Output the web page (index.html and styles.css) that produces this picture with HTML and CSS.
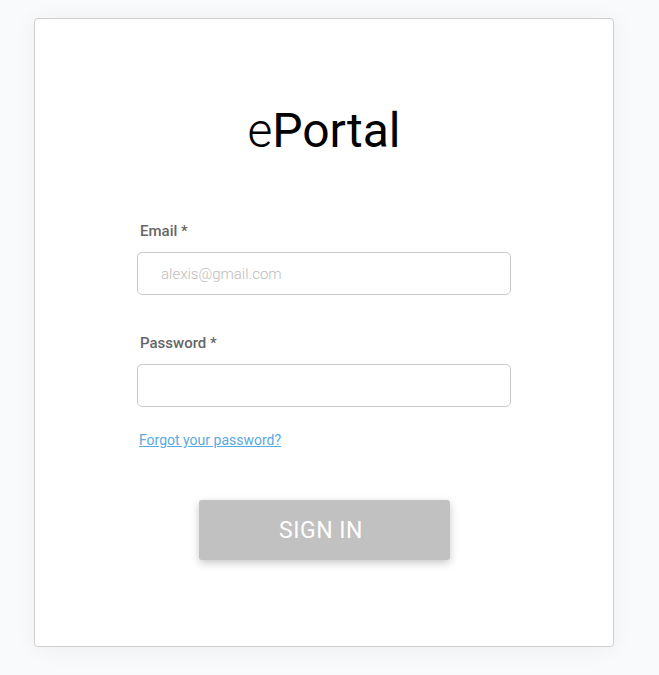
FILE: index.html
```html
<!DOCTYPE html>
<html lang="en">
<head>
<meta charset="utf-8">
<title>ePortal</title>
<link rel="stylesheet" href="styles.css">
</head>
<body>
<main class="card">
  <h1 class="title"><span class="title-e">e</span>Portal</h1>
  <form class="form">
    <label class="label" for="email">Email *</label>
    <input class="input" id="email" type="email" placeholder="alexis@gmail.com">
    <label class="label label-pw" for="pw">Password *</label>
    <input class="input" id="pw" type="password">
    <a class="forgot" href="#">Forgot your password?</a>
    <div class="actions">
      <button class="signin" type="button">SIGN IN</button>
    </div>
  </form>
</main>
</body>
</html>
```
FILE: styles.css
```css
html, body {
  margin: 0;
  padding: 0;
}
body {
  background: #f9fafb;
  font-family: Roboto, "Noto Sans", sans-serif;
  padding: 18px 0 0 34px;
  height: 675px;
  box-sizing: border-box;
  overflow: hidden;
}
.card {
  width: 580px;
  height: 629px;
  box-sizing: border-box;
  background: #fff;
  border: 1px solid #cfcfcf;
  border-radius: 4px;
  box-shadow: 0 2px 24px rgba(0, 0, 0, 0.05);
  padding-top: 84px;
}
.title {
  margin: 0;
  text-align: center;
  font-size: 48px;
  line-height: 56px;
  font-weight: 400;
  color: #000;
}
.title-e {
  font-weight: 300;
}
.form {
  width: 374px;
  margin: 62px auto 0;
  display: flex;
  flex-direction: column;
}
.label {
  font-size: 15px;
  line-height: 20px;
  font-weight: 500;
  color: #666;
  padding-left: 3px;
  margin-bottom: 11px;
}
.label-pw {
  margin-top: 38px;
}
.input {
  height: 43px;
  box-sizing: border-box;
  border: 1px solid #c9c9c9;
  border-radius: 5px;
  padding: 0 23px;
  font-family: Roboto, sans-serif;
  font-size: 15px;
  font-weight: 300;
  color: #333;
  background: #fff;
  outline: none;
}
.input::placeholder {
  color: #bcbcbc;
}
.forgot {
  margin-top: 24px;
  padding-left: 2px;
  font-size: 14px;
  line-height: 18px;
  color: #5aa9e0;
  text-decoration: underline;
  align-self: flex-start;
}
.actions {
  display: flex;
  justify-content: center;
  margin-top: 51px;
}
.signin {
  width: 251px;
  height: 60px;
  border: none;
  border-radius: 3px;
  background: #c1c1c1;
  color: #fff;
  font-family: Roboto, sans-serif;
  font-size: 23px;
  font-weight: 400;
  letter-spacing: 0.5px;
  padding: 0 6px 0 0;
  box-shadow: 0 3px 8px rgba(0, 0, 0, 0.22);
  cursor: pointer;
}
```
